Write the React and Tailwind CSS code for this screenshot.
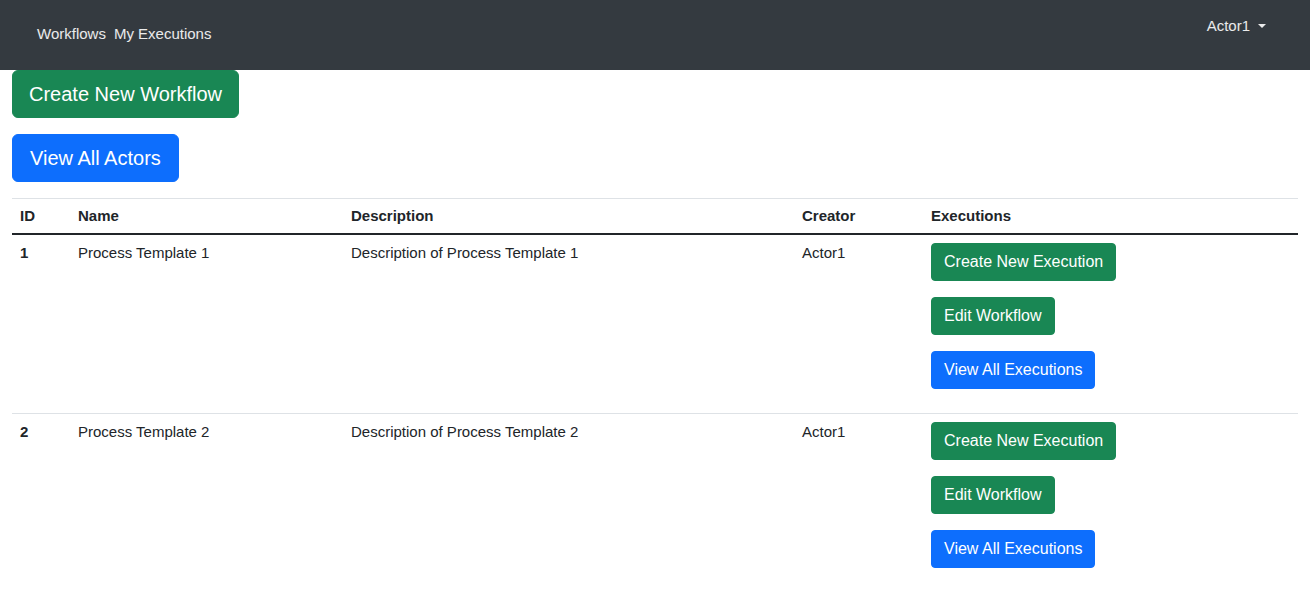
export default function App() {
  const workflows = [
    { id: 1, name: "Process Template 1", description: "Description of Process Template 1", creator: "Actor1" },
    { id: 2, name: "Process Template 2", description: "Description of Process Template 2", creator: "Actor1" },
  ];

  return (
    <div className="min-h-screen bg-white text-[#212529]" style={{ fontFamily: '"Liberation Sans", Arial, sans-serif' }}>
      {/* NAVBAR */}
      <nav className="h-[70px] bg-[#343a40] flex justify-between items-start pl-[37px] pr-[44px]">
        <div className="flex gap-2 pt-[23px] text-[15px] leading-[22px] text-white/90">
          <a>Workflows</a>
          <a>My Executions</a>
        </div>
        <div className="flex items-center pt-[15px] text-[15px] leading-[22px] text-white/90">
          <span>Actor1</span>
          <span className="ml-2 w-0 h-0 border-x-[4px] border-x-transparent border-t-[4px] border-t-white/90"></span>
        </div>
      </nav>

      <div className="px-3">
        <button className="block bg-[#198754] text-white text-[20px] leading-[30px] px-4 py-2 border border-[#198754] rounded-md">
          Create New Workflow
        </button>
        <button className="block mt-4 bg-[#0d6efd] text-white text-[20px] leading-[30px] px-[17px] py-2 border border-[#0d6efd] rounded-md">
          View All Actors
        </button>

        <table className="mt-4 w-full border-collapse text-[15px] leading-[18px] text-left">
          <thead>
            <tr className="border-t border-[#dee2e6] border-b-2 border-b-[#212529]">
              <th className="w-[58px] p-2 font-bold">ID</th>
              <th className="w-[273px] p-2 font-bold">Name</th>
              <th className="w-[451px] p-2 font-bold">Description</th>
              <th className="w-[129px] p-2 font-bold">Creator</th>
              <th className="p-2 font-bold">Executions</th>
            </tr>
          </thead>
          <tbody>
            {workflows.map((w) => (
              <tr key={w.id} className="border-b border-[#dee2e6] align-top">
                <td className="p-2 pt-[9px] font-bold">{w.id}</td>
                <td className="p-2 pt-[9px]">{w.name}</td>
                <td className="p-2 pt-[9px]">{w.description}</td>
                <td className="p-2 pt-[9px]">{w.creator}</td>
                <td className="p-2">
                  <div className="flex flex-col items-start gap-4 mb-4 text-[16px] leading-6">
                    <button className="bg-[#198754] text-white px-3 py-1.5 border border-[#198754] rounded">
                      Create New Execution
                    </button>
                    <button className="bg-[#198754] text-white px-3 py-1.5 border border-[#198754] rounded">
                      Edit Workflow
                    </button>
                    <button className="bg-[#0d6efd] text-white px-3 py-1.5 border border-[#0d6efd] rounded">
                      View All Executions
                    </button>
                  </div>
                </td>
              </tr>
            ))}
          </tbody>
        </table>
      </div>
    </div>
  );
}
